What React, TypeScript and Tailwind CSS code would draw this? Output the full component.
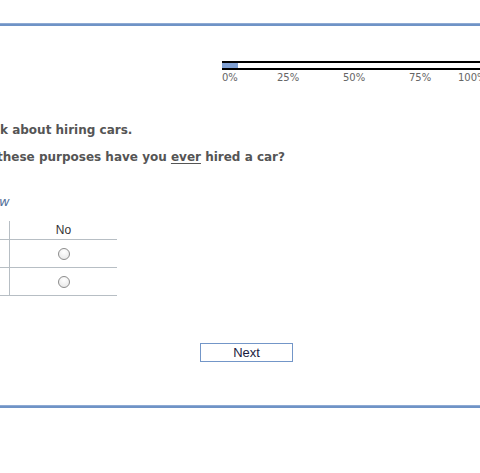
export default function App() {
  const labels = [
    { t: "0%", w: "w-[55px]" },
    { t: "25%", w: "w-[66px]" },
    { t: "50%", w: "w-[66px]" },
    { t: "75%", w: "w-[49px]" },
    { t: "100%", w: "w-[40px]" },
  ];

  return (
    <div className="w-[480px] h-[473px] overflow-hidden bg-white font-['DejaVu_Sans',sans-serif]">
      <div className="pt-[23px]">
        <div className="h-[3px] bg-[#6f93c6] border-t border-[#8eaad3]" />
      </div>

      {/* progress */}
      <div className="mt-[35px] ml-[222px]">
        <div className="w-[300px] h-[9px] border-t-2 border-b-2 border-black flex">
          <div className="w-[16px] bg-[#7f9fd2]" />
        </div>
        <div className="flex text-[10px] leading-[12px] text-[#666] mt-[2px] whitespace-nowrap">
          {labels.map((l) => (
            <span key={l.t} className={`${l.w} shrink-0`}>
              {l.t}
            </span>
          ))}
        </div>
      </div>

      {/* question */}
      <div className="mt-[38px] text-[12px] leading-[16px] font-bold text-[#555] whitespace-nowrap">
        <p>k about hiring cars.</p>
        <p className="mt-[11px] -ml-[3px]">
          these purposes have you <span className="underline underline-offset-2">ever</span> hired a car?
        </p>
      </div>

      <p className="mt-[28px] -ml-[1px] text-[13px] leading-[17px] italic text-[#52719a]">w</p>

      {/* grid */}
      <div className="mt-[11px] w-[117px] font-['Liberation_Sans',sans-serif] text-[12px] text-[#333]">
        <div className="flex h-[19px] border-b border-[#b7bec4]">
          <div className="w-[10px] border-r border-[#b7bec4]" />
          <div className="flex-1 text-center leading-[19px]">No</div>
        </div>
        {[0, 1].map((i) => (
          <div key={i} className="flex h-[28px] border-b border-[#b7bec4]">
            <div className="w-[10px] border-r border-[#b7bec4]" />
            <div className="flex-1 flex items-center justify-center">
              <span className="w-[12px] h-[12px] rounded-full border border-[#8c8c8c] bg-[radial-gradient(circle_at_50%_30%,#ffffff,#e4e4e4)]" />
            </div>
          </div>
        ))}
      </div>

      {/* next */}
      <div className="mt-[44px] ml-[200px]">
        <button className="w-[93px] h-[19px] border border-[#7396c8] bg-white text-[13px] leading-[15px] text-[#1a1a40] font-['Liberation_Sans',sans-serif]">
          Next
        </button>
      </div>

      <div className="mt-[41px]">
        <div className="h-[3px] bg-[#6f93c6] border-t border-[#8eaad3]" />
      </div>
    </div>
  );
}
